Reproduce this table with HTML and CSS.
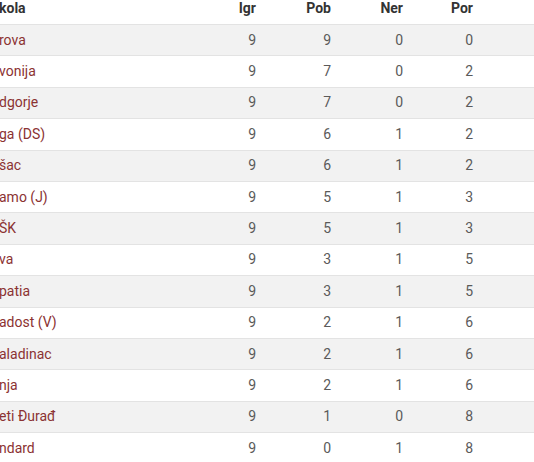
FILE: index.html
```html
<!DOCTYPE html>
<html>
<head>
<meta charset="utf-8">
<link rel="stylesheet" href="styles.css">
</head>
<body>
<div class="standings">
  <div class="row head">
    <div class="name">kola</div><div class="num">Igr</div><div class="num">Pob</div><div class="num">Ner</div><div class="num">Por</div><div></div>
  </div>
  <div class="row odd"><div class="name">rova</div><div class="num">9</div><div class="num">9</div><div class="num">0</div><div class="num">0</div><div></div></div>
  <div class="row"><div class="name">vonija</div><div class="num">9</div><div class="num">7</div><div class="num">0</div><div class="num">2</div><div></div></div>
  <div class="row odd"><div class="name">dgorje</div><div class="num">9</div><div class="num">7</div><div class="num">0</div><div class="num">2</div><div></div></div>
  <div class="row"><div class="name">ga (DS)</div><div class="num">9</div><div class="num">6</div><div class="num">1</div><div class="num">2</div><div></div></div>
  <div class="row odd"><div class="name">šac</div><div class="num">9</div><div class="num">6</div><div class="num">1</div><div class="num">2</div><div></div></div>
  <div class="row"><div class="name">amo (J)</div><div class="num">9</div><div class="num">5</div><div class="num">1</div><div class="num">3</div><div></div></div>
  <div class="row odd"><div class="name">ŠK</div><div class="num">9</div><div class="num">5</div><div class="num">1</div><div class="num">3</div><div></div></div>
  <div class="row"><div class="name">va</div><div class="num">9</div><div class="num">3</div><div class="num">1</div><div class="num">5</div><div></div></div>
  <div class="row odd"><div class="name">patia</div><div class="num">9</div><div class="num">3</div><div class="num">1</div><div class="num">5</div><div></div></div>
  <div class="row"><div class="name">adost (V)</div><div class="num">9</div><div class="num">2</div><div class="num">1</div><div class="num">6</div><div></div></div>
  <div class="row odd"><div class="name">aladinac</div><div class="num">9</div><div class="num">2</div><div class="num">1</div><div class="num">6</div><div></div></div>
  <div class="row"><div class="name">nja</div><div class="num">9</div><div class="num">2</div><div class="num">1</div><div class="num">6</div><div></div></div>
  <div class="row odd"><div class="name">eti Đurađ</div><div class="num">9</div><div class="num">1</div><div class="num">0</div><div class="num">8</div><div></div></div>
  <div class="row"><div class="name">ndard</div><div class="num">9</div><div class="num">0</div><div class="num">1</div><div class="num">8</div><div></div></div>
</div>
</body>
</html>
```
FILE: styles.css
```css
html, body {
  margin: 0;
  padding: 0;
  background: #fff;
}
.standings {
  font-family: Roboto, "Liberation Sans", sans-serif;
  font-size: 14px;
  color: #5a5a5a;
  width: 534px;
  overflow: hidden;
}
.row {
  display: grid;
  grid-template-columns: 216px 40px 75px 72px 70px 1fr;
  align-items: center;
  height: 31.4px;
  box-sizing: border-box;
  border-top: 1px solid #e3e3e3;
  padding-bottom: 1px;
}
.row.odd {
  background: #f2f2f2;
}
.row.head {
  height: 24px;
  border-top: none;
  padding-bottom: 0;
  align-items: start;
  font-weight: 700;
  color: #333;
  line-height: 16px;
}
.name {
  color: #8b3232;
  white-space: nowrap;
  margin-left: -1px;
}
.head .name {
  color: #333;
}
.num {
  text-align: right;
}
```
